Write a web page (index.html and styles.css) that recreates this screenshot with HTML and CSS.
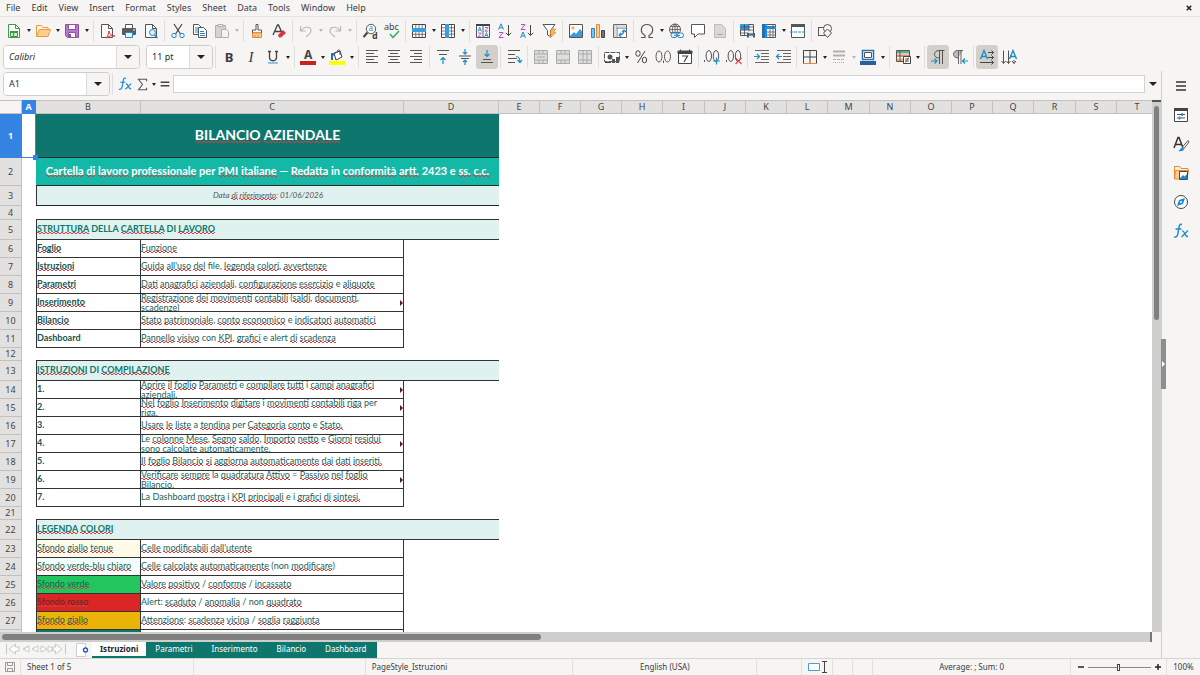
FILE: index.html
```html
<!DOCTYPE html>
<html lang="en">
<head>
<meta charset="utf-8">
<title>Bilancio Aziendale</title>
<link rel="stylesheet" href="styles.css">
</head>
<body>
<nav class="menubar" aria-label="Menu">
<button>File</button><button>Edit</button><button>View</button><button>Insert</button><button>Format</button><button>Styles</button><button>Sheet</button><button>Data</button><button>Tools</button><button>Window</button><button>Help</button>
<button class="close" aria-label="Close document"><svg viewBox="0 0 8 8" width="6" height="6"><path d="M1 1l6 6M7 1L1 7" stroke="#222" stroke-width="2"/></svg></button>
</nav>

<div class="toolbar" role="toolbar" aria-label="Standard">
<button class="tb" aria-label="New"><svg viewBox="0 0 16 16"><path d="M2.500 1.500h7l4 4v9h-11z" fill="#fff" stroke="#3a9d4a"/><path d="M9.500 1.500v4h4" fill="none" stroke="#3a9d4a"/><path d="M4.500 8.500h7v5h-7z" fill="#cdeccf" stroke="#3a9d4a"/><path d="M4 8h8v2H4zM7 8h1v5H7zM4 11.500h8" fill="#3a9d4a"/></svg></button><button class="dd" aria-label="New options"></button>
<button class="tb" aria-label="Open"><svg viewBox="0 0 16 16"><path d="M1.500 13.500v-11h5l1.500 2h5v3" fill="#fdf3e0" stroke="#ed9b40"/><path d="M1.500 13.500l3-7h11l-2.500 7z" fill="#fbd08c" stroke="#ed9b40"/></svg></button><button class="dd" aria-label="Open options"></button>
<button class="tb" aria-label="Save"><svg viewBox="0 0 16 16"><path d="M1.500 1.500h13v13h-11l-2-2z" fill="#b47ac6" stroke="#9150a5"/><path d="M4.500 1.500h7v5h-7z" fill="#fff" stroke="#9150a5"/><path d="M4.500 9.500h7v5h-7z" fill="#fff" stroke="#9150a5"/><path d="M6 11v3" stroke="#9150a5" stroke-width="2"/></svg></button><button class="dd" aria-label="Save options"></button>
<span class="sep wide"></span>
<button class="tb" aria-label="Export as PDF"><svg viewBox="0 0 16 16"><path d="M2.500 1.500h7l4 4v9h-11z" fill="#fafafa" stroke="#555"/><path d="M9.500 1.500v4h4" fill="none" stroke="#555"/><path d="M7 15c2-2 3-5 3-7 0 3 3 5 6 5-3-1-6 0-9 2z" fill="#fff" stroke="#dd3344"/></svg></button>
<button class="tb" aria-label="Print"><svg viewBox="0 0 16 16"><path d="M4.500 5v-3.500h7V5" fill="#fff" stroke="#555"/><rect x="1" y="5" width="14" height="7" rx="1" fill="#555c62"/><path d="M4.500 9.500h7v5h-7z" fill="#eaf4fc" stroke="#1e8bcd"/><path d="M12 7h2" stroke="#fff"/></svg></button>
<button class="tb" aria-label="Print preview"><svg viewBox="0 0 16 16"><path d="M2.500 1.500h7l4 4v9h-11z" fill="#fafafa" stroke="#555"/><path d="M9.500 1.500v4h4" fill="none" stroke="#555"/><circle cx="9.500" cy="9.500" r="3" fill="#d8ecfa" stroke="#1e8bcd"/><path d="M11.500 12l3 3" stroke="#1e8bcd" stroke-width="1.500"/></svg></button>
<span class="sep"></span>
<button class="tb" aria-label="Cut"><svg viewBox="0 0 16 16" fill="none"><path d="M4 1l6.500 10M12 1L5.500 11" stroke="#444" stroke-width="1.200"/><circle cx="4" cy="12.500" r="2.200" stroke="#1e8bcd"/><circle cx="12" cy="12.500" r="2.200" stroke="#1e8bcd"/></svg></button>
<button class="tb" aria-label="Copy"><svg viewBox="0 0 16 16"><path d="M1.500 1.500h5l3 3v7h-8z" fill="#fff" stroke="#555"/><path d="M3 5h4M3 7h4M3 9h4" stroke="#1e8bcd"/><path d="M6.500 4.500h5l3 3v7h-8z" fill="#fff" stroke="#555"/><path d="M8 8.500h4M8 10.500h5M8 12.500h5" stroke="#1e8bcd"/></svg></button>
<button class="tb" aria-label="Paste" disabled><svg viewBox="0 0 16 16"><path d="M1.500 2.500h10v12h-10z" fill="#d4d3d2" stroke="#b0b0af"/><path d="M4 1.500h5v2H4z" fill="#eee" stroke="#b0b0af"/><path d="M7.500 6.500h5l2 2v6h-7z" fill="#f4f4f3" stroke="#b0b0af"/></svg></button><button class="dd" disabled aria-label="Paste options"></button>
<span class="sep wide"></span>
<button class="tb" aria-label="Clone formatting"><svg viewBox="0 0 16 16"><path d="M7 1.500h2v5.500h3.500v3h-9v-3H7z" fill="#fff" stroke="#555"/><path d="M3.500 10h9v4.500h-9z" fill="#fbd08c" stroke="#ed8733"/><path d="M6 12v2M9 12v2" stroke="#ed8733"/></svg></button>
<button class="tb" aria-label="Clear formatting"><svg viewBox="0 0 16 16"><path d="M2 12L6.500 2h1L12 12M4 8.500h6" fill="none" stroke="#444" stroke-width="1.300"/><path d="M7 12l5-5 3 3-5 4.500H8z" fill="#dd3344"/></svg></button>
<span class="sep"></span>
<button class="tb" aria-label="Undo" disabled><svg viewBox="0 0 16 16"><path d="M2.500 3v5h5M3 8c3-5 10-5 10 0 0 3-3 4-5 6" fill="none" stroke="#b9b8b7" stroke-width="1.200"/></svg></button><button class="dd" disabled aria-label="Undo options"></button>
<button class="tb" aria-label="Redo" disabled><svg viewBox="0 0 16 16"><path d="M13.500 3v5h-5M13 8C10 3 3 3 3 8c0 3 3 4 5 6" fill="none" stroke="#b9b8b7" stroke-width="1.200"/></svg></button><button class="dd" disabled aria-label="Redo options"></button>
<span class="sep wide"></span>
<button class="tb" aria-label="Find and replace"><svg viewBox="0 0 16 16"><circle cx="9" cy="6" r="4.700" fill="#fff" stroke="#555"/><path d="M5.500 9.500L1.500 14" stroke="#444" stroke-width="2"/><text x="6.500" y="8" font-size="8" fill="#1e8bcd">a</text><text x="10" y="15.500" font-size="9" font-weight="bold" fill="#444">d</text></svg></button>
<button class="tb" aria-label="Spelling"><svg viewBox="0 0 16 16"><text x="0" y="7" font-size="9" fill="#444">abc</text><path d="M6 11l3 3.500L15 8" fill="none" stroke="#3fae6a" stroke-width="1.700"/></svg></button>
<span class="sep"></span>
<button class="tb" aria-label="Row"><svg viewBox="0 0 16 16"><path d="M1.500 1.500h13v13h-13z" fill="#fff" stroke="#444"/><path d="M4.800 1.500v13M8 1.500v13M11.200 1.500v13M1.500 11.300h13" stroke="#555" stroke-width=".8"/><path d="M1 5h14v4H1z" fill="#3a9de0"/></svg></button><button class="dd" aria-label="Row options"></button>
<button class="tb" aria-label="Column"><svg viewBox="0 0 16 16"><path d="M1.500 1.500h13v13h-13z" fill="#fff" stroke="#444"/><path d="M1.500 4.800h13M1.500 8h13M1.500 11.200h13M11.500 1.500v13" stroke="#555" stroke-width=".8"/><path d="M5 1h4v14H5z" fill="#3a9de0"/></svg></button><button class="dd" aria-label="Column options"></button>
<span class="sep wide"></span>
<button class="tb" aria-label="Sort"><svg viewBox="0 0 16 16"><path d="M1.500 1.500h13v13h-13zM8 2v12" fill="#fff" stroke="#555"/><path d="M1 1h14v2H1z" fill="#444"/><path d="M3 8.500l1.700-4.500 1.700 4.500M3.500 7h2.500M9.700 14l1.700-4.500 1.700 4.500M10.200 12.500h2.500" fill="none" stroke="#1e8bcd" stroke-width=".9"/><path d="M3 10h3.300L3 13.700h3.300M9.800 4.500h3.300L9.800 8.200h3.300" fill="none" stroke="#b04fc0" stroke-width=".9"/></svg></button>
<button class="tb" aria-label="Sort ascending"><svg viewBox="0 0 16 16" fill="none"><path d="M1.500 6.500L4 .8l2.500 5.700M2.300 4.800h3.400" stroke="#1e8bcd"/><path d="M2 9.500h4L2 14.500h4.500" stroke="#b04fc0"/><path d="M11.500 2v10.500M8.800 9.800l2.700 2.700 2.700-2.700" stroke="#444"/></svg></button>
<button class="tb" aria-label="Sort descending"><svg viewBox="0 0 16 16" fill="none"><path d="M2 1.500h4L2 6.500h4.500" stroke="#b04fc0"/><path d="M1.500 14.800L4 9l2.500 5.800M2.300 13h3.400" stroke="#1e8bcd"/><path d="M11.500 2v10.500M8.800 9.800l2.700 2.700 2.700-2.700" stroke="#444"/></svg></button>
<button class="tb" aria-label="AutoFilter"><svg viewBox="0 0 16 16"><path d="M2 1.500h12l-4.500 6v6l-3-1.500V7.500z" fill="#fff" stroke="#555"/><path d="M10.500 6h4l-2 3.500h2.500L9 15l1.500-4H9z" fill="#f8b45a" stroke="#ed8733" stroke-width=".7"/></svg></button>
<span class="sep"></span>
<button class="tb" aria-label="Insert image"><svg viewBox="0 0 16 16"><path d="M1.500 1.500h13v13h-13z" fill="#fff" stroke="#555"/><path d="M2 13l4-4 2 2 4-5 2 2.500V14H2z" fill="#3a9de0"/><circle cx="5" cy="5" r="1.700" fill="#f8b45a"/></svg></button>
<button class="tb" aria-label="Insert chart"><svg viewBox="0 0 16 16"><path d="M1.500 5.500h3v9h-3z" fill="#83beec" stroke="#1e8bcd"/><path d="M6.500 1.500h3v13h-3z" fill="#fbd08c" stroke="#ed8733"/><path d="M11.500 7.500h3v7h-3z" fill="#777" stroke="#444"/></svg></button>
<button class="tb" aria-label="Pivot table"><svg viewBox="0 0 16 16"><path d="M1.500 1.500h13v13h-13zM1.500 5h13M5 1.500v13" fill="#fff" stroke="#666"/><path d="M2 2h2.500v12H2zM5 2h9v2.500H5z" fill="#ddd"/><path d="M7 12c4 0 5-2 5-5M7 12l2-2M7 12l2 2M12 7l-2 2M12 7l2 2" fill="none" stroke="#1e8bcd" stroke-width="1.200"/></svg></button>
<span class="sep"></span>
<button class="tb" aria-label="Special character"><svg viewBox="0 0 16 16"><path d="M2 14.500h4v-2C0 9 2 1.500 8 1.500S16 9 10 12.500v2h4" fill="none" stroke="#555" stroke-width="1.200"/></svg></button><button class="dd" aria-label="Special characters"></button>
<button class="tb" aria-label="Hyperlink"><svg viewBox="0 0 16 16" fill="none"><circle cx="7" cy="6.500" r="5.500" stroke="#555"/><path d="M1.500 6.500h11M7 1v11M3 3.500h8M3 9.500h8M7 1C3.500 4 3.500 9 7 12M7 1c3.500 3 3.500 8 0 11" stroke="#555" stroke-width=".8"/><rect x="3" y="10" width="6" height="4.500" rx="2" stroke="#1e8bcd" fill="#f6f5f4"/><rect x="9.500" y="10" width="6" height="4.500" rx="2" stroke="#1e8bcd" fill="#f6f5f4"/><path d="M6 12.300h6" stroke="#1e8bcd"/></svg></button>
<button class="tb" aria-label="Comment"><svg viewBox="0 0 16 16"><path d="M1.500 1.500h13v9.500H8l-3.500 3.500V11h-3z" fill="#fff" stroke="#555"/></svg></button>
<button class="tb" aria-label="Headers and footers" disabled><svg viewBox="0 0 16 16"><path d="M2.500 1.500h7l4 4v9h-11z" fill="#dad9d8" stroke="#bdbcbb"/><path d="M5 11.500h6" stroke="#aaa"/></svg></button>
<span class="sep"></span>
<button class="tb" aria-label="Define print area"><svg viewBox="0 0 16 16"><path d="M1.500 1.500h13v11h-13z" fill="#fff" stroke="#555"/><path d="M1 1h9v6H1z" fill="#3a9de0"/><path d="M1.500 4h13M1.500 7h13M1.500 10h8M5.500 1.500v11M10 1.500v7" stroke="#445" stroke-width=".8"/><path d="M8 10h8v4.500H8z" fill="#4c5f70"/><path d="M10 8.500h4v2h-4zM10 12.500h4v2.500h-4z" fill="#d8ecfa"/></svg></button>
<button class="tb" aria-label="Freeze rows and columns"><svg viewBox="0 0 16 16"><path d="M1.500 1.500h13v13h-13z" fill="#fff" stroke="#555"/><path d="M1 3h14v3H1zM3 1h3v14H3z" fill="#2b8ad6"/><path d="M6 9h9M6 12h9M9 6v9M12 2v13" stroke="#555" stroke-width=".8"/><path d="M1 1h3v14H1z" fill="#1e6fb5"/></svg></button><button class="dd" aria-label="Freeze options"></button>
<button class="tb" aria-label="Split window"><svg viewBox="0 0 16 16"><path d="M1.500 1.500h13v13h-13z" fill="#fff" stroke="#555"/><path d="M1 1h14v3H1z" fill="#555"/><path d="M0 9h16" stroke="#1e8bcd" stroke-dasharray="3 1"/></svg></button>
<span class="sep"></span>
<button class="tb" aria-label="Draw functions"><svg viewBox="0 0 16 16" fill="#f6f5f4" stroke="#555"><rect x="1.500" y="4.500" width="8" height="8"/><circle cx="10.500" cy="5.500" r="4"/><path d="M10.500 6l4 4-4 4.500-4-4.500z"/></svg></button>
</div>

<div class="toolbar second" role="toolbar" aria-label="Formatting">
<div class="combo font"><input type="text" value="Calibri" aria-label="Font name"><button class="drop" aria-label="Choose font"></button></div>
<div class="combo size"><input type="text" value="11 pt" aria-label="Font size"><button class="drop" aria-label="Choose size"></button></div>
<span class="sep"></span>
<button class="tb glyph" aria-label="Bold"><b>B</b></button>
<button class="tb glyph serif" aria-label="Italic"><i>I</i></button>
<button class="tb" aria-label="Underline"><svg viewBox="0 0 16 16"><path d="M4.500 2.500V8c0 5 7 5 7 0V2.500M3 2.500h3M10 2.500h3" fill="none" stroke="#444" stroke-width="1.300"/><path d="M3 14h10" stroke="#6eb4e8" stroke-width="1.500"/></svg></button><button class="dd" aria-label="Underline options"></button>
<span class="sep wide"></span>
<button class="tb" aria-label="Font color"><svg viewBox="0 0 16 16"><text x="4" y="10" font-size="12" font-weight="bold" fill="#444">A</text><path d="M0 12h16v4H0z" fill="#c9211e"/></svg></button><button class="dd" aria-label="Font color options"></button>
<button class="tb" aria-label="Highlighting"><svg viewBox="0 0 16 16"><path d="M5 4l6-2 2 6-6 3z" fill="#fff" stroke="#444"/><path d="M8 4c0-4 3-4 3-1v3" fill="none" stroke="#444"/><path d="M2 11V4h5l-3 3v4z" fill="#2b6fae"/><path d="M0 12h16v4H0z" fill="#ffff00"/></svg></button><button class="dd" aria-label="Highlighting options"></button>
<span class="sep wide"></span>
<button class="tb" aria-label="Align left"><svg viewBox="0 0 16 16" stroke="#555"><path d="M2 1.500h12M2 4.500h8M2 7.500h12M2 10.500h8M2 13.500h12"/></svg></button>
<button class="tb" aria-label="Center"><svg viewBox="0 0 16 16" stroke="#555"><path d="M2 1.500h12M4 4.500h8M2 7.500h12M4 10.500h8M2 13.500h12"/></svg></button>
<button class="tb" aria-label="Align right"><svg viewBox="0 0 16 16" stroke="#555"><path d="M2 1.500h12M6 4.500h8M2 7.500h12M6 10.500h8M2 13.500h12"/></svg></button>
<span class="sep"></span>
<button class="tb" aria-label="Align top"><svg viewBox="0 0 16 16" fill="none"><path d="M2 1.500h12M4 5.500h8" stroke="#555"/><path d="M8 15V8.500M5.500 11L8 8.500l2.500 2.500" stroke="#1e8bcd" stroke-width="1.200"/></svg></button>
<button class="tb" aria-label="Center vertically"><svg viewBox="0 0 16 16" fill="none"><path d="M2 7h12M4 9.500h8" stroke="#555"/><path d="M8 0v5M6 3.200l2 2 2-2M8 16v-5M6 13l2-2 2 2" stroke="#1e8bcd" stroke-width="1.200"/></svg></button>
<button class="tb on" aria-label="Align bottom"><svg viewBox="0 0 16 16" fill="none"><path d="M4 10.500h8M2 13.500h12" stroke="#555"/><path d="M8 1v6.500M5.500 5L8 7.500 10.500 5" stroke="#1e8bcd" stroke-width="1.200"/></svg></button>
<span class="sep"></span>
<button class="tb" aria-label="Wrap text"><svg viewBox="0 0 16 16" fill="none"><path d="M2 1.500h12M2 5.500h7M2 9.500h9M2 13.500h7" stroke="#555"/><path d="M10 7.500c3 0 4 2 4 6M11.500 11l2.500 2.500L16 11" stroke="#1e8bcd" stroke-width="1.200"/></svg></button>
<span class="sep"></span>
<button class="tb" aria-label="Merge and center" disabled><svg viewBox="0 0 16 16"><path d="M1.500 1.500h13v13h-13zM1.500 5h13M1.500 11h13M6 1.500V5M10 1.500V5M6 11v3.500M10 11v3.500" fill="#dededd" stroke="#aaa"/><path d="M4 8h8" stroke="#aaa"/></svg></button>
<button class="tb" aria-label="Merge cells" disabled><svg viewBox="0 0 16 16"><path d="M1.500 1.500h13v13h-13zM1.500 5h13M1.500 11h13M6 1.500V5M10 1.500V5M6 11v3.500M10 11v3.500" fill="#dededd" stroke="#aaa"/></svg></button>
<button class="tb" aria-label="Split cells" disabled><svg viewBox="0 0 16 16"><path d="M1.500 1.500h13v13h-13zM1.500 5h13M1.500 11h13M6 1.500v13M10 1.500v13" fill="#dededd" stroke="#aaa"/></svg></button>
<span class="sep"></span>
<button class="tb" aria-label="Currency"><svg viewBox="0 0 16 16"><path d="M.5 3.500h15v9H.500z" fill="#fff" stroke="#555" stroke-dasharray="5 1"/><circle cx="6" cy="8" r="2.500" fill="#555"/><path d="M8 10h3v4H8zM12 8h3v6h-3z" fill="#555"/><path d="M1 13.500h6" stroke="#444"/></svg></button><button class="dd" aria-label="Currency options"></button>
<button class="tb" aria-label="Percent"><svg viewBox="0 0 16 16" fill="none" stroke="#444"><ellipse cx="5" cy="4.500" rx="2.200" ry="2.800"/><ellipse cx="11.500" cy="11" rx="2.200" ry="2.800"/><path d="M12 2L4.500 14"/></svg></button>
<button class="tb" aria-label="Number"><svg viewBox="0 0 16 16" fill="none" stroke="#555"><ellipse cx="4" cy="7.500" rx="3" ry="5.500"/><ellipse cx="12.500" cy="7.500" rx="3" ry="5.500"/><path d="M8.500 11.500v2.500"/></svg></button>
<button class="tb" aria-label="Date"><svg viewBox="0 0 16 16"><path d="M1.500 2.500h13v12h-13z" fill="#fff" stroke="#444"/><path d="M1 2h14v2.500H1zM3.500.5v3M12.500.5v3" fill="#444" stroke="#444"/><path d="M5 7h5.500L7 13" fill="none" stroke="#444" stroke-width="1.200"/></svg></button>
<span class="sep"></span>
<button class="tb" aria-label="Add decimal place"><svg viewBox="0 0 16 16" fill="none" stroke="#555"><path d="M.5 11v2"/><ellipse cx="4.800" cy="7" rx="2.700" ry="5.500"/><ellipse cx="12" cy="7" rx="2.700" ry="5.500"/><path d="M12.500 8.500v7M9 12h7" stroke="#1e8bcd" stroke-width="1.200"/></svg></button>
<button class="tb" aria-label="Delete decimal place"><svg viewBox="0 0 16 16" fill="none" stroke="#555"><path d="M.5 11v2"/><ellipse cx="4.800" cy="7" rx="2.700" ry="5.500"/><ellipse cx="12" cy="7" rx="2.700" ry="5.500"/><path d="M9.500 9l6 6M15.500 9l-6 6" stroke="#e0464f" stroke-width="1.200"/></svg></button>
<span class="sep"></span>
<button class="tb" aria-label="Increase indent"><svg viewBox="0 0 16 16" fill="none"><path d="M2 1.500h14M8 4.500h8M8 7.500h8M8 10.500h8M2 13.500h14" stroke="#666"/><path d="M1 7.500h5.500M4 5l2.500 2.500L4 10" stroke="#1e8bcd" stroke-width="1.200"/></svg></button>
<button class="tb" aria-label="Decrease indent"><svg viewBox="0 0 16 16" fill="none"><path d="M2 1.500h14M8 4.500h8M8 7.500h8M8 10.500h8M2 13.500h14" stroke="#666"/><path d="M7 7.500H1.500M4 5L1.500 7.500 4 10" stroke="#1e8bcd" stroke-width="1.200"/></svg></button>
<span class="sep"></span>
<button class="tb" aria-label="Borders"><svg viewBox="0 0 16 16" fill="none"><path d="M1.500 14V1.500h13V14M8 2v12M2 8h12" stroke="#444"/><path d="M1 14.500h14" stroke="#ed8733"/></svg></button><button class="dd" aria-label="Borders options"></button>
<button class="tb" aria-label="Border style" disabled><svg viewBox="0 0 16 16"><path d="M2 2.500h12M2 6.500h12" stroke="#b0b0af" stroke-width="2"/><path d="M2 10.500h12" stroke="#b0b0af" stroke-dasharray="3 1"/><path d="M2 13.500h12" stroke="#b0b0af" stroke-dasharray="1 1"/></svg></button><button class="dd" disabled aria-label="Border style options"></button>
<button class="tb" aria-label="Border color"><svg viewBox="0 0 16 16"><path d="M2.500 1.500h11v9h-11z" fill="#fff" stroke="#2b6fae" stroke-width="1.500"/><path d="M4.500 3.500h7v5h-7z" fill="#fff" stroke="#555"/><path d="M0 12h16v4H0z" fill="#2a6099"/></svg></button><button class="dd" aria-label="Border color options"></button>
<span class="sep wide"></span>
<button class="tb" aria-label="Conditional formatting"><svg viewBox="0 0 16 16"><path d="M1.500 1.500h13v11h-13z" fill="#fff" stroke="#555"/><path d="M2 2h12v2.500H2z" fill="#5cb87a"/><path d="M2 5.500h12V8H2z" fill="#e98080"/><path d="M2 9.500h7V12H2z" fill="#f8b45a"/><path d="M5 1.500v11" stroke="#555"/><path d="M8.500 7.500h7v7h-7z" fill="#fff" stroke="#444"/><path d="M10 10h4M10 12h4M13.500 8.500l-3 5" stroke="#444" stroke-width=".8"/></svg></button><button class="dd" aria-label="Conditional options"></button>
<span class="sep wide"></span>
<button class="tb on" aria-label="Left to right"><svg viewBox="0 0 16 16" fill="none"><path d="M9 9C3 9 3 1.500 9 1.500h5.500M9.500 1.500V15M12.500 1.500V15" stroke="#555"/><path d="M1 12h6M4.500 9.500L7 12l-2.500 2.500" stroke="#1e8bcd" stroke-width="1.200"/></svg></button>
<button class="tb" aria-label="Right to left"><svg viewBox="0 0 16 16"><path d="M6 9C0 9 0 1.500 6 1.500h5M6.500 1.500V15M9 1.500V15" fill="#bbb" stroke="#666"/><path d="M16 12h-5.500M13 9.500L10.500 12l2.500 2.500" fill="none" stroke="#1e8bcd" stroke-width="1.200"/></svg></button>
<span class="sep"></span>
<button class="tb on" aria-label="Horizontal text"><svg viewBox="0 0 16 16" fill="none"><path d="M1.500 10L5 1.500 8.500 10M2.500 7.500h5" stroke="#1e8bcd" stroke-width="1.400"/><path d="M9 3.500h5.500M12.500 1.500l2 2-2 2M9 8.500h5.500M12.500 6.500l2 2-2 2M1 13.500h13.500M12.500 11.500l2 2-2 2" stroke="#444"/></svg></button>
<button class="tb" aria-label="Vertical text"><svg viewBox="0 0 16 16" fill="none"><path d="M8.500 10L12 1.500l3.500 8.500M9.500 7.500h5" stroke="#1e8bcd" stroke-width="1.400"/><path d="M2.500 1.500v13M.500 12l2 2.500 2-2.500M7.500 1.500v13M5.500 12l2 2.500 2-2.500M13 11v3.500M11 12l2 2.500 2-2.500" stroke="#555"/></svg></button>
</div>

<div class="work">
<main class="doc">
<div class="formula">
<div class="combo name"><input type="text" value="A1" aria-label="Name box"><button class="drop" aria-label="Choose range"></button></div>
<span class="sep"></span>
<button class="fb fx" aria-label="Function wizard"><svg viewBox="0 0 16 16" width="14" height="14" fill="none" stroke="#1e8bcd"><path d="M9 1.500C6 .5 6 4 5.500 7S5 15 1 14M2.500 6h6" stroke-width="1.400"/><path d="M9 8c3-1 2 6 6 5.500M15 7.500L8.500 14" stroke-width="1.300"/></svg></button>
<button class="fb" aria-label="Select function"><svg viewBox="0 0 16 16" width="13" height="13"><path d="M13 4V1.500H3L8 8l-5 6.500h10V12" fill="none" stroke="#555" stroke-width="1.300"/></svg></button><button class="dd" aria-label="Function options"></button>
<button class="fb" aria-label="Formula"><svg viewBox="0 0 16 16" width="14" height="14"><path d="M3 6h10M3 10h10" stroke="#444" stroke-width="1.600"/></svg></button>
<input class="line" type="text" aria-label="Input line">
<button class="drop expand" aria-label="Expand formula bar"></button>
</div>
<div class="view">
<div class="sheet">
<table>
<colgroup><col class="ch"><col class="ca"><col class="cb"><col class="cc"><col class="cd"><col class="n"><col class="n"><col class="n"><col class="n"><col class="m"><col class="n"><col class="n"><col class="n"><col class="m"><col class="n"><col class="n"><col class="n"><col class="n"><col class="m"><col class="n"><col class="n"></colgroup>
<thead><tr><th class="corner"></th><th class="sel">A</th><th>B</th><th>C</th><th>D</th><th>E</th><th>F</th><th>G</th><th>H</th><th>I</th><th>J</th><th>K</th><th>L</th><th>M</th><th>N</th><th>O</th><th>P</th><th>Q</th><th>R</th><th>S</th><th>T</th></tr></thead>
<tbody>
<tr class="r44"><th class="sel">1</th><td class="cursor"><span class="handle"></span></td><td colspan="3" class="title"><u>BILANCIO</u> <u>AZIENDALE</u></td></tr>
<tr class="r28"><th>2</th><td></td><td colspan="3" class="subtitle"><u>Cartella</u> <u>di</u> <u>lavoro</u> <u>professionale</u> per <u>PMI</u> <u>italiane</u> — <u>Redatta</u> in <u>conformità</u> <u>artt.</u> 2423 e <u>ss.</u> <u>c.c.</u></td></tr>
<tr class="r20"><th>3</th><td></td><td colspan="3" class="date">Data <u>di</u> <u>riferimento</u>: 01/06/2026</td></tr>
<tr class="r14 above"><th>4</th><td></td><td colspan="3"></td></tr>
<tr class="r20"><th>5</th><td></td><td colspan="3" class="section"><u>STRUTTURA</u> DELLA <u>CARTELLA</u> DI <u>LAVORO</u></td></tr>
<tr><th>6</th><td></td><td class="k"><u>Foglio</u></td><td class="v"><u>Funzione</u></td></tr>
<tr><th>7</th><td></td><td class="k"><u>Istruzioni</u></td><td class="v"><u>Guida</u> <u>all'uso</u> <u>del</u> file, <u>legenda</u> <u>colori</u>, <u>avvertenze</u></td></tr>
<tr><th>8</th><td></td><td class="k"><u>Parametri</u></td><td class="v"><u>Dati</u> <u>anagrafici</u> <u>aziendali</u>, <u>configurazione</u> <u>esercizio</u> e <u>aliquote</u></td></tr>
<tr><th>9</th><td></td><td class="k"><u>Inserimento</u></td><td class="v more"><div class="clip"><p><u>Registrazione</u> <u>dei</u> <u>movimenti</u> <u>contabili</u> (<u>saldi</u>, <u>documenti</u>,<br><u>scadenze</u>)</p></div></td></tr>
<tr><th>10</th><td></td><td class="k"><u>Bilancio</u></td><td class="v"><u>Stato</u> <u>patrimoniale</u>, <u>conto</u> <u>economico</u> e <u>indicatori</u> <u>automatici</u></td></tr>
<tr><th>11</th><td></td><td class="k">Dashboard</td><td class="v"><u>Pannello</u> <u>visivo</u> con <u>KPI</u>, <u>grafici</u> e alert <u>di</u> <u>scadenza</u></td></tr>
<tr class="r13 above"><th>12</th><td></td><td colspan="3"></td></tr>
<tr class="r20"><th>13</th><td></td><td colspan="3" class="section"><u>ISTRUZIONI</u> DI <u>COMPILAZIONE</u></td></tr>
<tr><th>14</th><td></td><td class="k">1.</td><td class="v more"><div class="clip"><p><u>Aprire</u> <u>il</u> <u>foglio</u> <u>Parametri</u> e <u>compilare</u> <u>tutti</u> i <u>campi</u> <u>anagrafici</u><br><u>aziendali.</u></p></div></td></tr>
<tr><th>15</th><td></td><td class="k">2.</td><td class="v more"><div class="clip"><p><u>Nel</u> <u>foglio</u> <u>Inserimento</u> <u>digitare</u> i <u>movimenti</u> <u>contabili</u> <u>riga</u> per<br><u>riga.</u></p></div></td></tr>
<tr><th>16</th><td></td><td class="k">3.</td><td class="v"><u>Usare</u> <u>le</u> <u>liste</u> a <u>tendina</u> per <u>Categoria</u> <u>conto</u> e <u>Stato.</u></td></tr>
<tr><th>17</th><td></td><td class="k">4.</td><td class="v more"><div class="clip"><p>Le <u>colonne</u> <u>Mese</u>, <u>Segno</u> <u>saldo</u>, <u>Importo</u> <u>netto</u> e <u>Giorni</u> <u>residui</u><br><u>sono</u> <u>calcolate</u> <u>automaticamente.</u></p></div></td></tr>
<tr><th>18</th><td></td><td class="k">5.</td><td class="v"><u>Il</u> <u>foglio</u> <u>Bilancio</u> <u>si</u> <u>aggiorna</u> <u>automaticamente</u> <u>dai</u> <u>dati</u> <u>inseriti.</u></td></tr>
<tr><th>19</th><td></td><td class="k">6.</td><td class="v more"><div class="clip"><p><u>Verificare</u> <u>sempre</u> la <u>quadratura</u> <u>Attivo</u> = <u>Passivo</u> <u>nel</u> <u>foglio</u><br><u>Bilancio.</u></p></div></td></tr>
<tr><th>20</th><td></td><td class="k">7.</td><td class="v">La Dashboard <u>mostra</u> i <u>KPI</u> <u>principali</u> e i <u>grafici</u> <u>di</u> <u>sintesi.</u></td></tr>
<tr class="r13 above"><th>21</th><td></td><td colspan="3"></td></tr>
<tr class="r20"><th>22</th><td></td><td colspan="3" class="section"><u>LEGENDA</u> <u>COLORI</u></td></tr>
<tr><th>23</th><td></td><td class="s cream"><u>Sfondo</u> <u>giallo</u> <u>tenue</u></td><td class="v"><u>Celle</u> <u>modificabili</u> <u>dall'utente</u></td></tr>
<tr><th>24</th><td></td><td class="s mint"><u>Sfondo</u> <u>verde-blu</u> <u>chiaro</u></td><td class="v"><u>Celle</u> <u>calcolate</u> <u>automaticamente</u> (non <u>modificare</u>)</td></tr>
<tr><th>25</th><td></td><td class="s green"><u>Sfondo</u> <u>verde</u></td><td class="v"><u>Valore</u> <u>positivo</u> / <u>conforme</u> / <u>incassato</u></td></tr>
<tr><th>26</th><td></td><td class="s red"><u>Sfondo</u> <u>rosso</u></td><td class="v">Alert: <u>scaduto</u> / <u>anomalia</u> / non <u>quadrato</u></td></tr>
<tr><th>27</th><td></td><td class="s yellow"><u>Sfondo</u> <u>giallo</u></td><td class="v"><u>Attenzione</u>: <u>scadenza</u> <u>vicina</u> / <u>soglia</u> <u>raggiunta</u></td></tr>
<tr><th></th><td></td><td class="s teal"></td><td class="v"></td></tr>
</tbody>
</table>
</div>
<div class="vscroll"><div class="thumb"></div></div>
</div>
<div class="hscroll"><div class="thumb"></div></div>
<div class="tabs">
<svg class="nav" viewBox="0 0 62 14" width="62" height="14" fill="#fff" stroke="#c9c8c7"><path d="M1.500 1.500v11M10.500 2L4 7l6.500 5V9H14V5h-3.500zM24 4l-6 3 6 3V4l-5 3M33 4l-6 3 6 3V4M36 4l6 3-6 3zM43 4l6 3-6 3zM50.500 2L57 7l-6.500 5V9H47V5h3.500zM60.500 1.500v11"/></svg>
<button class="add" aria-label="Add sheet"><svg viewBox="0 0 14 14" width="14" height="14"><path d="M1.500.5h9v13h-9z" fill="#fff" stroke="#ccc"/><circle cx="10.500" cy="7" r="2" fill="#fff" stroke="#2a5db0" stroke-width="1.400"/></svg></button>
<button class="tab active">Istruzioni</button><button class="tab">Parametri</button><button class="tab">Inserimento</button><button class="tab">Bilancio</button><button class="tab">Dashboard</button>
</div>
</main>
<aside class="sidebar">
<span class="grip"></span>
<button aria-label="Sidebar settings"><svg viewBox="0 0 16 16"><path d="M3 4h10M3 8h10M3 12h10" stroke="#333" stroke-width="1.500"/></svg></button>
<button aria-label="Properties"><svg viewBox="0 0 16 16"><path d="M1.500 1.500h13v13h-13z" fill="#fff" stroke="#444"/><path d="M1 1h14v3H1z" fill="#444"/><path d="M4 7.500h8M4 11h8" stroke="#555"/><path d="M9 6v3M6.500 9.500v3" stroke="#1e8bcd" stroke-width="1.500"/></svg></button>
<button aria-label="Styles"><svg viewBox="0 0 16 16"><path d="M1 12L5 1.500h1L10 12M2.500 8.500h6" fill="none" stroke="#333" stroke-width="1.500"/><path d="M15 4.500L9.500 11l1.500 1.500 5-6.500z" fill="#fff" stroke="#555"/><path d="M5 15c2 0 2-3 4.500-3.500L11 13c0 2-3 2.500-6 2z" fill="#1e8bcd"/></svg></button>
<button aria-label="Gallery"><svg viewBox="0 0 16 16"><path d="M1.500 14V1.500h5l1.500 2h7V6" fill="#fdf3e0" stroke="#ed8733"/><path d="M1.500 14l1-8.500h13L14 14z" fill="#fbd08c" stroke="#ed8733"/><path d="M6.500 6.500h8v8h-8z" fill="#fff" stroke="#446"/><path d="M7 13l3-3 1.500 1.500L14 9v5H7z" fill="#1e8bcd"/></svg></button>
<button aria-label="Navigator"><svg viewBox="0 0 16 16"><circle cx="8" cy="8" r="6.500" fill="#fff" stroke="#444"/><path d="M12 4l-2 6-6 2 2-6z" fill="#1e8bcd"/><circle cx="8" cy="8" r="1" fill="#fff"/></svg></button>
<button aria-label="Functions"><svg viewBox="0 0 16 16" fill="none" stroke="#1e8bcd"><path d="M9 1.500C6 .5 6 4 5.500 7S5 15 1 14M2.500 6h6" stroke-width="1.400"/><path d="M9 8c3-1 2 6 6 5.500M15 7.500L8.500 14" stroke-width="1.300"/></svg></button>
</aside>
</div>

<footer class="status">
<span class="mid"><svg viewBox="0 0 12 12" width="12" height="12" fill="none" stroke="#999"><path d="M1.500 1.500h9v9h-9zM3.500 1.500v3h5v-3M3.500 10.500v-3h5v3"/></svg></span>
<span>Sheet 1 of 5</span><span></span><span>PageStyle_Istruzioni</span><span class="mid">English (USA)</span><span></span>
<span class="mid"><svg viewBox="0 0 20 12" width="20" height="12" fill="none"><path d="M1.500 2.500h11v7h-11z" fill="#fff" stroke="#4a9fd8"/><path d="M15 .5h5M15 11.500h5M17.500.5v11" stroke="#444"/></svg></span>
<span></span><span></span><span class="mid">Average: ; Sum: 0</span>
<span class="zoom"><button aria-label="Zoom out"><svg viewBox="0 0 8 8" width="8" height="8"><path d="M1 4h6" stroke="#222" stroke-width="1.500"/></svg></button><input type="range" min="0" max="100" value="49" aria-label="Zoom"><button aria-label="Zoom in"><svg viewBox="0 0 8 8" width="8" height="8"><path d="M1 4h6M4 1v6" stroke="#222" stroke-width="1.500"/></svg></button></span>
<span class="mid">100%</span>
</footer>
</body>
</html>
```
FILE: styles.css
```css
* { box-sizing: border-box; }
body {
  margin: 0;
  height: 100vh;
  display: flex;
  flex-direction: column;
  overflow: hidden;
  background: #f6f5f4;
  color: #3c3c3c;
  font: 9px/12px "Noto Sans", sans-serif;
}
button {
  border: 0;
  padding: 0;
  background: none;
  color: inherit;
  font: inherit;
}
input { font: inherit; color: #2e2e2e; min-width: 0; }
svg { display: block; overflow: visible; }

.menubar {
  display: flex;
  align-items: center;
  gap: 11px;
  height: 17px;
  padding: 0 8px 0 6px;
  border-bottom: 1px solid #e4e3e2;
  flex: none;
}
.close { margin-left: auto; }

.toolbar {
  display: flex;
  align-items: center;
  height: 27px;
  padding-left: 3px;
  flex: none;
}
.second { padding-bottom: 1px; }
.tb {
  width: 22px;
  height: 24px;
  display: flex;
  align-items: center;
  justify-content: center;
  flex: none;
  border-radius: 3px;
}
.tb svg { width: 16px; height: 16px; }
.tb.on { background: #d3d0cc; }
.glyph { font-size: 13px; }
.serif { font-family: "Liberation Serif", serif; font-size: 15px; }
.dd {
  width: 7px;
  height: 24px;
  display: flex;
  align-items: center;
  justify-content: center;
  flex: none;
}
.dd::after {
  content: "";
  border: 2px solid transparent;
  border-top: 3px solid #222;
  border-bottom: 0;
}
.dd:disabled::after { border-top-color: #b9b8b7; }
.sep {
  width: 5px;
  height: 22px;
  flex: none;
  background: linear-gradient(#e0dfde, #e0dfde) center / 1px 100% no-repeat;
}
.sep.wide { width: 6px; }

.combo {
  display: flex;
  height: 24px;
  border: 1px solid #cfccc9;
  border-radius: 4px;
  background: #fff;
  overflow: hidden;
  flex: none;
}
.combo input {
  flex: 1;
  border: 0;
  padding: 0 5px;
  background: #fff;
  font-size: 9px;
}
.drop {
  width: 23px;
  border-left: 1px solid #dddbd9;
  background: #f6f5f4;
  display: flex;
  align-items: center;
  justify-content: center;
  flex: none;
}
.drop::after {
  content: "";
  border: 4px solid transparent;
  border-top-color: #222;
  border-bottom: 0;
}
.font { width: 137px; margin-right: 6px; }
.combo.font input { font-style: italic; }
.size { width: 67px; }
.name { width: 107px; }

.work { display: flex; flex: 1; min-height: 0; }
.doc { flex: 1; min-width: 0; display: flex; flex-direction: column; }
.formula {
  display: flex;
  align-items: center;
  height: 29px;
  padding: 0 0 3px 3px;
  flex: none;
}
.fb { width: 16px; display: flex; justify-content: center; flex: none; }
.fx { width: 19px; }
.line {
  flex: 1;
  height: 18px;
  border: 1px solid #d5d3d0;
  background: #fff;
}
.expand { width: 16px; border: 0; background: none; }
.view { display: flex; flex: 1; min-height: 0; }
.sheet { flex: 1; min-width: 0; overflow: hidden; background: #fff; }

table { table-layout: fixed; border-collapse: separate; border-spacing: 0; width: 0; }
.ch { width: 22px; }
.ca { width: 14px; }
.cb { width: 105px; }
.cc { width: 263px; }
.cd { width: 95px; }
.n { width: 41px; }
.m { width: 42px; }
thead tr { height: 14px; }
tr { height: 18px; }
.r44 { height: 44px; }
.r28 { height: 28px; }
.r20 { height: 20px; }
.r14 { height: 14px; }
.r13 { height: 13px; }
th {
  padding: 0;
  background: #e2e1e0;
  border-right: 1px solid #c2c1c0;
  border-bottom: 1px solid #c2c1c0;
  font-weight: normal;
  font-size: 9px;
  line-height: 12px;
  color: #444;
}
thead th { border-top: 1px solid #c2c1c0; }
.corner { background: #f6f5f4; }
.sel { background: #3584e4; color: #fff; font-weight: bold; border-color: #3584e4; }
td {
  padding: 0 0 1px;
  font: 9px/10px Lato, sans-serif;
  color: #1b5e57;
  white-space: nowrap;
}
/* Misspelling squiggle, tight under the baseline */
u {
  text-decoration: none;
  background: url("data:image/svg+xml,%3Csvg xmlns='http://www.w3.org/2000/svg' width='4' height='2'%3E%3Cpath d='M0 0h2v1H0zM2 1h2v1H2z' fill='%23e0393e'/%3E%3C/svg%3E") left bottom / 4px 2px repeat-x;
}
.cursor { position: relative; border-right: 1px solid #3584e4; border-bottom: 1px solid #3584e4; }
.handle { position: absolute; right: -3px; bottom: -3px; width: 5px; height: 5px; background: #3584e4; z-index: 1; }
.title, .subtitle, .date { text-align: center; border-bottom: 1px solid #1c2b2a; }
.title { background: #0f766e; color: #fff; font-size: 14px; line-height: 20px; font-weight: bold; }
.subtitle { background: #14b8a6; color: #fff; font-size: 11px; line-height: 14px; font-weight: bold; }
.date { background: #e0f2ef; color: #555; font-size: 8px; font-style: italic; border-left: 1px solid #333; }
.above td:last-child { border-bottom: 1px solid #333; }
.section {
  background: #e0f2ef;
  color: #0f766e;
  font-size: 9px;
  font-weight: bold;
  border-left: 1px solid #333;
  border-bottom: 1px solid #333;
}
.k, .s { border-left: 1px solid #333; border-right: 1px solid #333; border-bottom: 1px solid #333; }
.k { font-weight: bold; color: #14534d; }
.v { border-right: 1px solid #333; border-bottom: 1px solid #333; }
.clip { height: 17px; display: flex; align-items: center; overflow: hidden; }
.clip p { margin: 0; }
.more { position: relative; padding-bottom: 0; }
.more::after {
  content: "";
  position: absolute;
  right: 0;
  top: 6px;
  border: 3px solid transparent;
  border-left-color: #5b1a1a;
  border-right: 0;
}
.cream { background: #fffbe8; }
.mint { background: #f0fdfa; }
.green { background: #22c55e; }
.red { background: #dc2626; color: #5a2a26; }
.yellow { background: #eab308; }
.teal { background: #0f766e; }

.vscroll { width: 9px; padding: 4px 2px; background: #cececd; border-top: 2px solid #555; flex: none; }
.vscroll .thumb { height: 41%; background: #808080; border-radius: 3px; }
.hscroll { height: 10px; margin-right: 9px; padding: 2px; background: #cececd; border-right: 2px solid #777; flex: none; }
.hscroll .thumb { width: 47%; height: 6px; background: #808080; border-radius: 3px; }

.tabs { display: flex; height: 16px; padding-left: 5px; font-size: 8px; flex: none; }
.nav { margin-right: 8px; }
.add { width: 17px; }
.tab {
  padding: 0 10px 0 9px;
  background: #0f766e;
  color: #fff;
  border-bottom: 2px solid #0f766e;
}
.tab.active { background: #fff; color: #222; font-weight: bold; padding: 0 8px; }

.sidebar {
  position: relative;
  width: 39px;
  border-left: 1px solid #d0cfce;
  display: flex;
  flex-direction: column;
  align-items: center;
  gap: 13px;
  padding-top: 7px;
  flex: none;
}
.sidebar button svg { width: 16px; height: 16px; }
.grip { position: absolute; left: -1px; top: 268px; width: 5px; height: 50px; background: #8e8e8e; }
.grip::after {
  content: "";
  position: absolute;
  left: 1px;
  top: 22px;
  border: 3px solid transparent;
  border-left-color: #fff;
  border-right: 0;
}

.status {
  display: grid;
  grid-template-columns: 21px 173fr 172fr 208fr 184fr 45fr 31px 20px 20px 198fr 96px 33px;
  height: 17px;
  border-top: 1px solid #d5d4d3;
  font-size: 8px;
  flex: none;
}
.status > span {
  display: flex;
  align-items: center;
  padding-left: 6px;
  border-right: 1px solid #e2e1e0;
  white-space: nowrap;
}
.status > .mid { justify-content: center; padding: 0; }
.status > span:last-child { border: 0; }
.status > .zoom { padding: 0 4px 0 6px; }
.zoom input {
  appearance: none;
  flex: 1;
  height: 12px;
  margin: 0 3px;
  background: linear-gradient(#888, #888) center / 100% 1px no-repeat;
}
.zoom input::-webkit-slider-thumb {
  appearance: none;
  width: 3px;
  height: 7px;
  background: #fff;
  border: 1px solid #444;
}
```
